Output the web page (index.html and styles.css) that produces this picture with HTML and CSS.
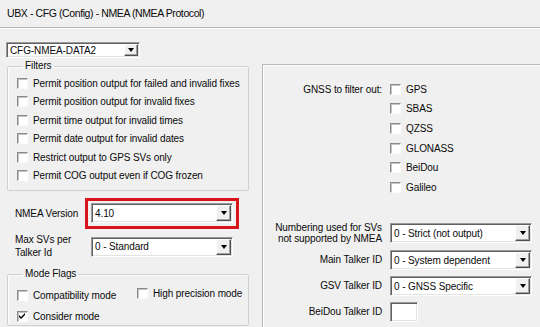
FILE: index.html
```html
<!DOCTYPE html>
<html lang="en">
<head>
    <meta charset="UTF-8">
    <title>UBX - CFG (Config) - NMEA (NMEA Protocol)</title>
    <link rel="stylesheet" href="styles.css">
</head>
<body>
    <div class="title">UBX - CFG (Config) - NMEA (NMEA Protocol)</div>

    <div class="content">
        <!-- left column -->
        <div class="left">
            <div class="combo combo-msg">
                <span class="combo-text">CFG-NMEA-DATA2</span>
                <span class="combo-btn"></span>
            </div>

            <fieldset class="group filters">
                <legend>Filters</legend>
                <label class="check"><span class="box"></span>Permit position output for failed and invalid fixes</label>
                <label class="check"><span class="box"></span>Permit position output for invalid fixes</label>
                <label class="check"><span class="box"></span>Permit time output for invalid times</label>
                <label class="check"><span class="box"></span>Permit date output for invalid dates</label>
                <label class="check"><span class="box"></span>Restrict output to GPS SVs only</label>
                <label class="check"><span class="box"></span>Permit COG output even if COG frozen</label>
            </fieldset>

            <div class="form-left">
                <span class="lbl">NMEA Version</span>
                <div class="highlight">
                    <div class="combo">
                        <span class="combo-text">4.10</span>
                        <span class="combo-btn"></span>
                    </div>
                </div>
                <span class="lbl two">Max SVs per<br>Talker Id</span>
                <div class="combo combo-svs">
                    <span class="combo-text">0 - Standard</span>
                    <span class="combo-btn"></span>
                </div>
            </div>

            <fieldset class="group modes">
                <legend>Mode Flags</legend>
                <div class="mode-grid">
                    <label class="check"><span class="box"></span>Compatibility mode</label>
                    <label class="check high"><span class="box"></span>High precision mode</label>
                    <label class="check"><span class="box checked">
                        <svg width="7" height="7" viewBox="0 0 7 7"><polygon points="0,2 2,4 6,0 6,2 2,6 0,4" fill="#000"/></svg>
                    </span>Consider mode</label>
                </div>
            </fieldset>
        </div>

        <!-- right column -->
        <div class="right">
            <div class="panel">
                <div class="form-right">
                    <span class="lbl gnss-lbl">GNSS to filter out:</span>
                    <div class="gnss-list">
                        <label class="check"><span class="box"></span>GPS</label>
                        <label class="check"><span class="box"></span>SBAS</label>
                        <label class="check"><span class="box"></span>QZSS</label>
                        <label class="check"><span class="box"></span>GLONASS</label>
                        <label class="check"><span class="box"></span>BeiDou</label>
                        <label class="check"><span class="box"></span>Galileo</label>
                    </div>

                    <span class="lbl two">Numbering used for SVs<br>not supported by NMEA</span>
                    <div class="combo">
                        <span class="combo-text">0 - Strict (not output)</span>
                        <span class="combo-btn"></span>
                    </div>

                    <span class="lbl">Main Talker ID</span>
                    <div class="combo">
                        <span class="combo-text">0 - System dependent</span>
                        <span class="combo-btn"></span>
                    </div>

                    <span class="lbl">GSV Talker ID</span>
                    <div class="combo">
                        <span class="combo-text">0 - GNSS Specific</span>
                        <span class="combo-btn"></span>
                    </div>

                    <span class="lbl">BeiDou Talker ID</span>
                    <div class="textbox"></div>
                </div>
            </div>
        </div>
    </div>
</body>
</html>
```

FILE: styles.css
```css
* { box-sizing: border-box; }
body {
    margin: 0;
    background: #f0f0f0;
    font-family: "Liberation Sans", Arial, sans-serif;
    font-size: 10px;
    letter-spacing: -0.1px;
    color: #0a0a0a;
    overflow: hidden;
}
.title {
    height: 28px;
    padding-left: 7px;
    line-height: 27px;
    font-size: 10.5px;
    letter-spacing: -0.4px;
    border-bottom: 1px solid #b4b4b4;
    box-shadow: 0 1px 0 #fff;
}
.content { display: flex; }
.left { width: 249px; padding-left: 6px; flex-shrink: 0; }
.right { flex: 1; margin-left: 13px; padding-top: 36px; }

/* combo box, classic sunken look */
.combo {
    display: flex;
    width: 142px;
    height: 20px;
    background: #fff;
    border: 1px solid;
    border-color: #9a9a9a #fff #fff #9a9a9a;
    box-shadow: inset 1px 1px 0 #606060, inset -1px -1px 0 #e3e3e3;
}
.combo-text {
    flex: 1;
    padding-left: 3px;
    display: flex;
    align-items: center;
    white-space: nowrap;
}
.combo-btn {
    width: 15px;
    margin: 1px;
    background: #f0f0f0;
    border: 1px solid;
    border-color: #fff #505050 #505050 #fff;
    box-shadow: inset -1px -1px 0 #a0a0a0;
    display: flex;
    align-items: center;
    justify-content: center;
}
.combo-btn::after {
    content: "";
    border-left: 3.5px solid transparent;
    border-right: 3.5px solid transparent;
    border-top: 4px solid #000;
}
.combo-msg { width: 134px; height: 16px; margin-top: 14px; }
.combo-msg .combo-btn { width: 14px; }

/* group boxes */
.group {
    width: 242px;
    margin: 0 0 0 1px;
    border: 1px solid #d0d0d0;
    border-radius: 2px;
    box-shadow: inset 1px 1px 0 #fafafa;
    padding: 0 8px 0 9px;
    min-width: 0;
}
legend {
    padding: 0 2px;
    margin-left: 6px;
    line-height: 12px;
}
.filters { margin-top: 2px; padding-top: 2px; padding-bottom: 5px; }
.modes { margin-top: 9px; padding-top: 5px; height: 58px; }

.check {
    display: flex;
    align-items: center;
    height: 18.5px;
    white-space: nowrap;
}
.box {
    width: 11px;
    height: 11px;
    margin-right: 5px;
    background: #fff;
    border: 1px solid;
    border-color: #8a8a8a #fcfcfc #fcfcfc #8a8a8a;
    box-shadow: inset 1px 1px 0 #c4c4c4;
    display: flex;
    align-items: center;
    justify-content: center;
    flex-shrink: 0;
}
.box svg { display: block; }

.mode-grid {
    display: grid;
    grid-template-columns: 120px auto;
}
.mode-grid .check { height: 20.7px; }
.mode-grid .high { margin-top: -2px; }

/* NMEA version / max SVs */
.form-left {
    display: grid;
    grid-template-columns: 70px auto;
    row-gap: 5px;
    align-items: center;
    margin: 7px 0 0 9px;
}
.lbl { white-space: nowrap; line-height: 12px; }
.lbl.two { line-height: 12.5px; }
.highlight {
    width: 154px;
    border: 3px solid #d7141a;
    padding: 2px 3px 3px;
}
.combo-svs { margin-left: 6px; }

/* right side */
.panel {
    height: 263px;
    border-top: 1px solid #b9b9b9;
    border-left: 1px solid #b9b9b9;
    box-shadow: inset 1px 1px 0 #fff;
    padding-top: 14.5px;
}
.form-right {
    display: grid;
    grid-template-columns: 119px 142px;
    column-gap: 8px;
    row-gap: 6px;
    align-items: center;
}
.form-right .lbl { text-align: right; }
.form-right .lbl.two { line-height: 11px; }
.gnss-lbl { align-self: start; line-height: 19.6px !important; }
.gnss-list { margin-bottom: 19px; }
.gnss-list .check { height: 19.6px; }
.textbox {
    width: 28px;
    height: 20px;
    background: #fff;
    border: 1px solid;
    border-color: #9a9a9a #fff #fff #9a9a9a;
    box-shadow: inset 1px 1px 0 #606060, inset -1px -1px 0 #e3e3e3;
}
```
